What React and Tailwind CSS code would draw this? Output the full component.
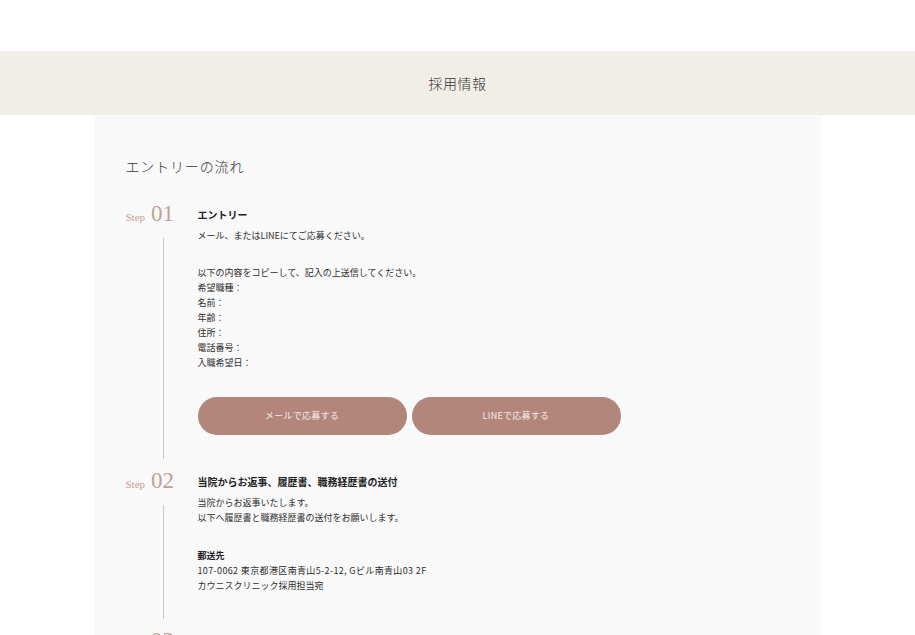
// 採用情報ページ: エントリーの流れ
const serif = { fontFamily: '"Liberation Serif", "Noto Sans CJK JP", serif' };

function StepLabel({ num }) {
  return (
    <div className="flex items-baseline gap-[6px] h-[24px] text-[#c4a198]">
      <span className="text-[11px] leading-none font-['Liberation_Serif',serif]">Step</span>
      <span className="text-[23px] leading-[24px] font-['Liberation_Serif',serif] text-[#c0a097]">{num}</span>
    </div>
  );
}

function Step({ num, last, children, pb }) {
  return (
    <div className="flex">
      <div className="w-[72px] flex-shrink-0 flex flex-col">
        <StepLabel num={num} />
        {!last && <div className="ml-[37px] mt-[12px] mb-[10px] w-px flex-1 bg-[#d8c6c1]" />}
      </div>
      <div className={`flex-1 pt-[5px] ${pb}`}>{children}</div>
    </div>
  );
}

export default function App() {
  return (
    <div className="min-h-[635px] bg-white font-['Noto_Sans_CJK_JP',sans-serif] text-[#333]">
      <div className="h-[51px]" />

      {/* ページタイトル帯 */}
      <div className="h-[64px] bg-[#f1eee8] flex items-center justify-center">
        <h1 className="text-[14px] tracking-[0.04em] text-[#333] font-light">採用情報</h1>
      </div>

      {/* 本文パネル */}
      <div className="mx-auto w-[726px] bg-[#f9f9f9] pl-[31px] pr-[31px] pt-[43px]">
        <h2 className="text-[14px] leading-[20px] tracking-[0.06em] text-[#333] font-light" style={serif}>
          エントリーの流れ
        </h2>

        <div className="mt-[24px]">
          <Step num="01" pb="pb-[34px]">
            <p className="text-[10px] leading-[16px] font-bold text-[#222]">エントリー</p>
            <p className="mt-[5px] text-[9px] leading-[15px] text-[#2e2e2e]">メール、またはLINEにてご応募ください。</p>

            <div className="mt-[22px] text-[9px] leading-[15px] text-[#2e2e2e]">
              <p>以下の内容をコピーして、記入の上送信してください。</p>
              <p>希望職種：</p>
              <p>名前：</p>
              <p>年齢：</p>
              <p>住所：</p>
              <p>電話番号：</p>
              <p>入職希望日：</p>
            </div>

            <div className="mt-[27px] flex gap-[5px]">
              <button className="w-[209px] h-[38px] rounded-full bg-[#b2867a] text-[9px] text-[#f5ebe8] tracking-[0.03em]">
                メールで応募する
              </button>
              <button className="w-[209px] h-[38px] rounded-full bg-[#b2867a] text-[9px] text-[#f5ebe8] tracking-[0.03em]">
                LINEで応募する
              </button>
            </div>
          </Step>

          <Step num="02" pb="pb-[36px]">
            <p className="text-[10px] leading-[16px] font-bold text-[#222]">当院からお返事、履歴書、職務経歴書の送付</p>
            <div className="mt-[5px] text-[9px] leading-[15px] text-[#2e2e2e]">
              <p>当院からお返事いたします。</p>
              <p>以下へ履歴書と職務経歴書の送付をお願いします。</p>
            </div>
            <div className="mt-[23px] text-[9px] leading-[15px] text-[#2e2e2e]">
              <p className="font-bold text-[#222]">郵送先</p>
              <p className="tracking-[0.04em]">107-0062 東京都港区南青山5-2-12, Gビル南青山03 2F</p>
              <p>カウニスクリニック採用担当宛</p>
            </div>
          </Step>

          <Step num="03" last pb="pb-[40px]">
            <div className="h-[16px]" />
          </Step>
        </div>
      </div>
    </div>
  );
}
